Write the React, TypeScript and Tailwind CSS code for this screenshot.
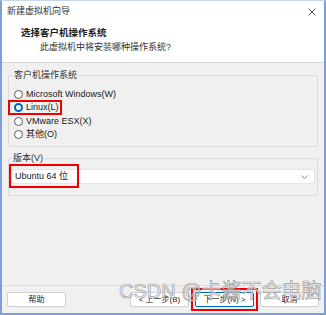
// New VM wizard – guest OS selection step (VMware-style dialog)
import { useState } from 'react';

const OPTIONS = [
  { id: 'win', label: 'Microsoft Windows(W)' },
  { id: 'linux', label: 'Linux(L)' },
  { id: 'esx', label: 'VMware ESX(X)' },
  { id: 'other', label: '其他(O)' },
];

const FONT = "font-['Liberation_Sans','Noto_Sans_CJK_SC',sans-serif]";

function Radio({ checked }: { checked: boolean }) {
  return (
    <span
      className={
        'w-[9px] h-[9px] rounded-full border bg-white flex items-center justify-center shrink-0 ' +
        (checked ? 'border-[#0067c0] border-[2px]' : 'border-[#5a5a5a]')
      }
    >
      {checked && <span className="w-[3px] h-[3px] rounded-full bg-white" />}
    </span>
  );
}

function Button({ children, primary }: { children: React.ReactNode; primary?: boolean }) {
  return (
    <button
      className={
        'w-[59px] h-[15px] rounded-[2px] bg-white text-[8px] leading-none text-[#222] flex items-center justify-center ' +
        (primary ? 'border border-[#0067c0]' : 'border border-[#d0d0d0]')
      }
    >
      {children}
    </button>
  );
}

export default function App() {
  const [os] = useState('linux');

  return (
    <div
      className={`${FONT} relative w-[326px] h-[315px] flex flex-col bg-[#f0f0f0] border-l-2 border-r-2 border-b-2 border-t border-l-[#7d9fd6] border-r-[#7d9fd6] border-b-[#7d9fd6] border-t-[#c9d6ea] overflow-hidden text-[#1a1a1a]`}
    >
      {/* header */}
      <div className="h-[62px] bg-white border-b border-[#d8d8d8] flex flex-col shrink-0">
        <div className="flex items-center justify-between h-[22px] pl-[5px] pr-[8px]">
          <span className="text-[9px] text-[#333]">新建虚拟机向导</span>
          <svg width="8" height="8" viewBox="0 0 8 8" className="text-[#444]">
            <path d="M0.5 0.5 L7.5 7.5 M7.5 0.5 L0.5 7.5" stroke="currentColor" strokeWidth="0.9" />
          </svg>
        </div>
        <div className="pl-[19px] mt-[4px] text-[9.5px] font-bold leading-[12px]">选择客户机操作系统</div>
        <div className="pl-[38px] mt-[2px] text-[9px] leading-[12px] text-[#333]">此虚拟机中将安装哪种操作系统?</div>
      </div>

      {/* body */}
      <div className="flex-1 px-[6px] pt-[7px] flex flex-col gap-[6px]">
        <fieldset className="border border-[#dcdcdc] rounded-[2px] h-[77px] pl-[5px]">
          <legend className="px-[1px] ml-[-1px] text-[9px] leading-[10px] text-[#333]">客户机操作系统</legend>
          <div className="flex flex-col mt-[9px] gap-[3.5px]">
            {OPTIONS.map((o) => (
              <div key={o.id} className="relative flex items-center gap-[3px] h-[10px]">
                <Radio checked={os === o.id} />
                <span className="text-[9px] leading-none">{o.label}</span>
                {o.id === 'linux' && (
                  <span className="absolute left-[-6px] top-[-3px] w-[54px] h-[15px] border-2 border-[#f00000]" />
                )}
              </div>
            ))}
          </div>
        </fieldset>

        <fieldset className="border border-[#dcdcdc] rounded-[2px] h-[43px] px-[2px]">
          <legend className="px-[1px] ml-[1px] text-[9px] leading-[10px] text-[#333]">版本(V)</legend>
          <div className="relative mt-[6px] h-[15px] bg-white border border-[#e6e6e6] rounded-[2px] flex items-center justify-between pl-[3px] pr-[6px]">
            <span className="text-[9px] leading-none">Ubuntu 64 位</span>
            <svg width="7" height="4" viewBox="0 0 7 4" className="text-[#888]">
              <path d="M0.5 0.5 L3.5 3.5 L6.5 0.5" fill="none" stroke="currentColor" strokeWidth="0.9" />
            </svg>
            <span className="absolute left-[-3px] top-[-6px] w-[70px] h-[24px] border-2 border-[#f00000]" />
          </div>
        </fieldset>
      </div>

      {/* footer */}
      <div className="h-[28px] border-t border-[#dcdcdc] flex items-center justify-between px-[5px] shrink-0">
        <Button>帮助</Button>
        <div className="flex items-center gap-[6px]">
          <Button>&lt; 上一步(B)</Button>
          <div className="relative">
            <Button primary>下一步(N) &gt;</Button>
            <span className="absolute left-[-4px] top-[-4px] w-[67px] h-[23px] border-2 border-[#f00000]" />
          </div>
          <Button>取消</Button>
        </div>
      </div>

      {/* CSDN watermark */}
      <div className="absolute left-[117px] top-[280px] text-[20px] leading-none text-white/60 [-webkit-text-stroke:0.7px_#a0a0a0] whitespace-nowrap pointer-events-none">
        CSDN @卡酱不会电脑
      </div>
    </div>
  );
}
